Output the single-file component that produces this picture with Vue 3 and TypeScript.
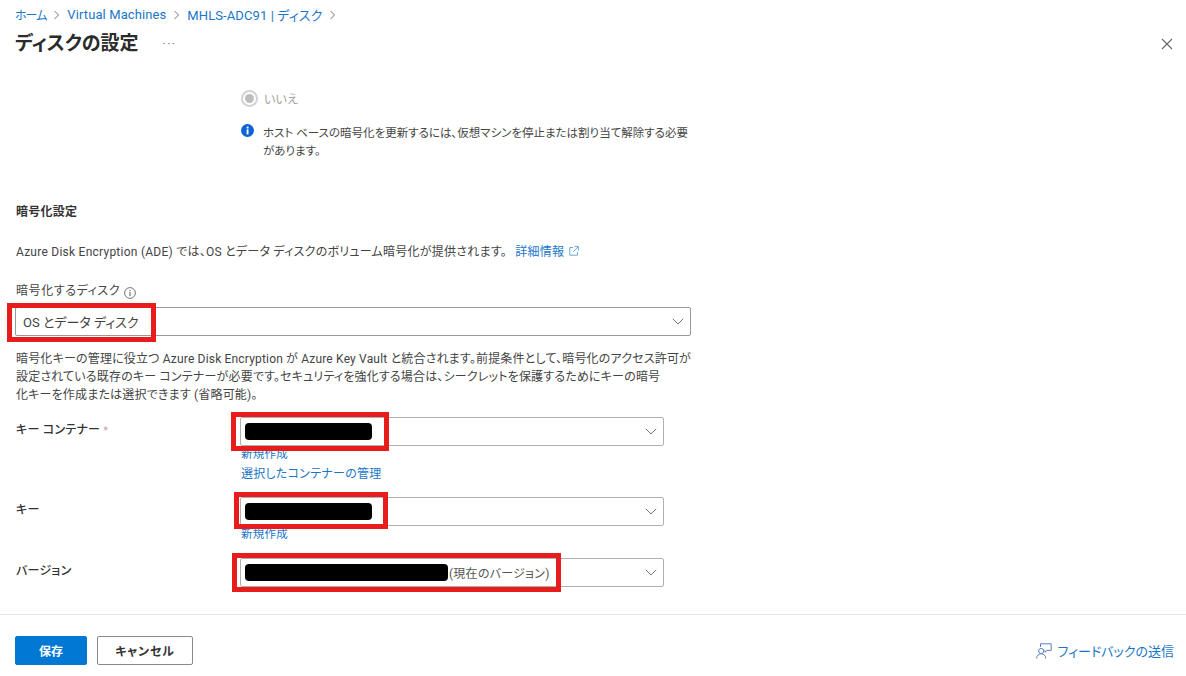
<script setup lang="ts">
const crumbs: string[] = ['ホーム', 'Virtual Machines', 'MHLS-ADC91 | ディスク']
</script>

<template>
  <div class="page">
    <header class="head">
      <nav class="crumbs">
        <template v-for="c in crumbs" :key="c">
          <a class="link">{{ c }}</a>
          <svg class="sep" width="7" height="10" viewBox="0 0 7 10"><path d="M1.5 1l4 4-4 4" fill="none" stroke="#777" stroke-width="1"/></svg>
        </template>
      </nav>
      <div class="titlebar">
        <h1>ディスクの設定</h1>
        <span class="more">···</span>
        <svg class="close" width="12" height="12" viewBox="0 0 12 12"><path d="M1 1l10 10M11 1L1 11" stroke="#666" stroke-width="1.1" fill="none"/></svg>
      </div>
    </header>

    <main class="body">
      <div class="host">
        <div class="radio-row">
          <span class="radio"><span class="dot"></span></span>
          <span class="radio-label">いいえ</span>
        </div>
        <div class="info">
          <svg class="info-icon" width="13" height="13" viewBox="0 0 13 13"><circle cx="6.5" cy="6.5" r="6.5" fill="#0f62d6"/><rect x="5.6" y="5.4" width="1.9" height="5" fill="#fff"/><rect x="5.6" y="2.6" width="1.9" height="1.9" fill="#fff"/></svg>
          <p>ホスト ベースの暗号化を更新するには、仮想マシンを停止または割り当て解除する必要があります。</p>
        </div>
      </div>

      <h2>暗号化設定</h2>
      <p class="intro">Azure Disk Encryption (ADE) では、OS とデータ ディスクのボリューム暗号化が提供されます。 <a class="link learn">詳細情報<svg class="ext" width="10" height="10" viewBox="0 0 10 10"><path d="M4 1.5H.8v7.7h7.7V6M5.5.6h3.9v3.9M9.2.8L4.2 5.8" fill="none" stroke="#5a9fdc" stroke-width=".9"/></svg></a></p>

      <div class="disk-label">暗号化するディスク
        <svg class="hint" width="12" height="12" viewBox="0 0 12 12"><circle cx="6" cy="6" r="5.4" fill="none" stroke="#666" stroke-width=".9"/><path d="M6 5v4M6 3v1.1" stroke="#555" stroke-width="1"/></svg>
      </div>
      <div class="select wide">
        <span>OS とデータ ディスク</span>
        <svg class="chev" width="12" height="7" viewBox="0 0 12 7"><path d="M.8.8L6 6l5.2-5.2" fill="none" stroke="#777" stroke-width="1"/></svg>
        <i class="mark m-disk"></i>
      </div>

      <p class="desc">暗号化キーの管理に役立つ Azure Disk Encryption が Azure Key Vault と統合されます。前提条件として、暗号化のアクセス許可が<br>設定されている既存のキー コンテナーが必要です。セキュリティを強化する場合は、シークレットを保護するためにキーの暗号<br>化キーを作成または選択できます (省略可能)。</p>

      <div class="field f-container">
        <label>キー コンテナー <b>*</b></label>
        <div class="control">
          <div class="select">
            <span class="mask"></span>
            <svg class="chev" width="12" height="7" viewBox="0 0 12 7"><path d="M.8.8L6 6l5.2-5.2" fill="none" stroke="#777" stroke-width="1"/></svg>
            <i class="mark m-container"></i>
          </div>
          <a class="link small">新規作成</a>
          <a class="link manage">選択したコンテナーの管理</a>
        </div>
      </div>

      <div class="field f-key">
        <label>キー</label>
        <div class="control">
          <div class="select">
            <span class="mask"></span>
            <svg class="chev" width="12" height="7" viewBox="0 0 12 7"><path d="M.8.8L6 6l5.2-5.2" fill="none" stroke="#777" stroke-width="1"/></svg>
            <i class="mark m-key"></i>
          </div>
          <a class="link small">新規作成</a>
        </div>
      </div>

      <div class="field f-version">
        <label>バージョン</label>
        <div class="control">
          <div class="select">
            <span class="mask long"></span><span class="current">(現在のバージョン)</span>
            <svg class="chev" width="12" height="7" viewBox="0 0 12 7"><path d="M.8.8L6 6l5.2-5.2" fill="none" stroke="#777" stroke-width="1"/></svg>
            <i class="mark m-version"></i>
          </div>
        </div>
      </div>
    </main>

    <footer class="foot">
      <button class="btn primary">保存</button>
      <button class="btn">キャンセル</button>
      <a class="feedback">
        <svg width="16" height="16" viewBox="0 0 16 16" fill="none" stroke="#5b7fc7" stroke-width="1"><path d="M4.5 4V.8h10.7v6.6H11L9 9.300V7.400"/><circle cx="5.200" cy="8" r="2.600"/><path d="M.7 15.500c0-3 2-4.700 4.500-4.700s4.500 1.700 4.500 4.700"/></svg>
        フィードバックの送信
      </a>
    </footer>
  </div>
</template>

<style>
html, body { margin: 0; background: #fff; }
</style>

<style scoped>
.page {
  width: 1186px;
  height: 676px;
  overflow: hidden;
  display: flex;
  flex-direction: column;
  font-family: Roboto, "Noto Sans CJK JP", sans-serif;
  font-feature-settings: "palt";
  font-size: 12px;
  letter-spacing: .25px;
  color: #333;
  background: #fff;
}
.head { padding: 6px 12px 0 15px; height: 76px; box-sizing: border-box; }
.crumbs { display: flex; align-items: center; height: 17px; font-size: 13px; letter-spacing: .1px; }
.crumbs .link:first-child { font-size: 12px; letter-spacing: -1px; }
.link { color: #1a76c9; text-decoration: none; }
.sep { margin: 0 7px; }
.titlebar { display: flex; align-items: center; height: 36px; margin-top: 3px; position: relative; }
h1 { margin: 0; font-size: 19px; font-weight: 700; letter-spacing: 0; color: #2b2b2b; line-height: 36px; }
.more { margin-left: 24px; color: #777; font-size: 12px; letter-spacing: 1.5px; }
.close { position: absolute; right: 1px; top: 12px; }
.body { flex: 1; padding: 13px 0 0 16px; width: 675px; }
.host { padding-left: 225px; }
.radio-row { display: flex; align-items: center; height: 18px; }
.radio { width: 13px; height: 13px; border: 2px solid #d2d2d2; border-radius: 50%; display: flex; align-items: center; justify-content: center; margin-right: 6px; }
.dot { width: 9px; height: 9px; border-radius: 50%; background: #bdbdbd; }
.radio-label { color: #a0a0a0; }
.info { display: flex; gap: 9px; margin-top: 17px; }
.info-icon { flex: none; }
.info p { margin: 0; line-height: 18px; width: 428px; font-size: 11.5px; letter-spacing: 0; color: #444; }
h2 { margin: 43px 0 0; font-size: 12px; font-weight: 700; line-height: 18px; color: #333; }
.intro { margin: 22px 0 0; line-height: 18px; color: #444; white-space: nowrap; }
.learn { margin-left: 5px; }
.ext { margin-left: 5px; }
.disk-label { margin-top: 21px; line-height: 18px; display: flex; align-items: center; gap: 4px; letter-spacing: .6px; color: #444; }
.hint { margin-top: 4px; }
.select {
  position: relative;
  box-sizing: border-box;
  height: 29px;
  width: 424px;
  border: 1px solid #b0b0b0;
  border-radius: 2px;
  display: flex;
  align-items: center;
  padding-left: 7px;
  color: #444;
  font-size: 12px;
  background: #fff;
}
.select.wide { margin-left: -1px; width: 676px; margin-top: 7px; border-color: #999; font-size: 13px; letter-spacing: 0; }
.chev { position: absolute; right: 6px; top: 10px; }
.mark { position: absolute; border: 5px solid #e71c1c; box-sizing: border-box; display: block; }
.m-disk { left: -9px; top: -5px; width: 149px; height: 39px; }
.m-container { left: -10px; top: -6px; width: 158px; height: 39px; }
.m-key { left: -7px; top: -6px; width: 154px; height: 37px; }
.m-version { left: -9px; top: -6px; width: 329px; height: 39px; }
.mask { display: block; width: 127px; height: 17px; border-radius: 4px; background: #000; margin-left: -3px; margin-top: -1px; flex: none; }
.mask.long { width: 203px; }
.current { color: #555; margin-left: 1px; }
.desc { margin: 14px 0 0; line-height: 18px; letter-spacing: .18px; color: #444; width: 680px; white-space: nowrap; }
.field { display: flex; }
.f-container { margin-top: 13px; }
.f-key { margin-top: 14px; }
.f-version { margin-top: 17px; }
.field label { width: 224px; flex: none; font-size: 12px; line-height: 18px; padding-top: 4px; font-weight: 500; color: #333; }
.field label b { color: #c99; font-weight: 400; font-size: 10px; }
.control { display: flex; flex-direction: column; align-items: flex-start; }
.small { font-size: 11.5px; line-height: 14px; margin: 1px 0 0 1px; }
.manage { font-size: 12px; line-height: 18px; margin: 4px 0 0 1px; }
.foot {
  height: 62px;
  box-sizing: border-box;
  border-top: 1px solid #e6e6e6;
  display: flex;
  align-items: flex-start;
  padding: 21px 12px 0 15px;
  gap: 10px;
}
.btn {
  height: 29px;
  width: 96px;
  box-sizing: border-box;
  border: 1px solid #8a8a8a;
  border-radius: 2px;
  background: #fff;
  color: #333;
  font: 700 12px Roboto, "Noto Sans CJK JP", sans-serif;
  font-feature-settings: "palt";
  letter-spacing: .8px;
  padding: 0;
}
.btn.primary { width: 72px; background: #0078d4; border-color: #0078d4; color: #fff; letter-spacing: 0; }
.feedback { margin-left: auto; display: flex; align-items: center; gap: 6px; color: #1a76c9; height: 29px; font-size: 13px; letter-spacing: 0; }
</style>
